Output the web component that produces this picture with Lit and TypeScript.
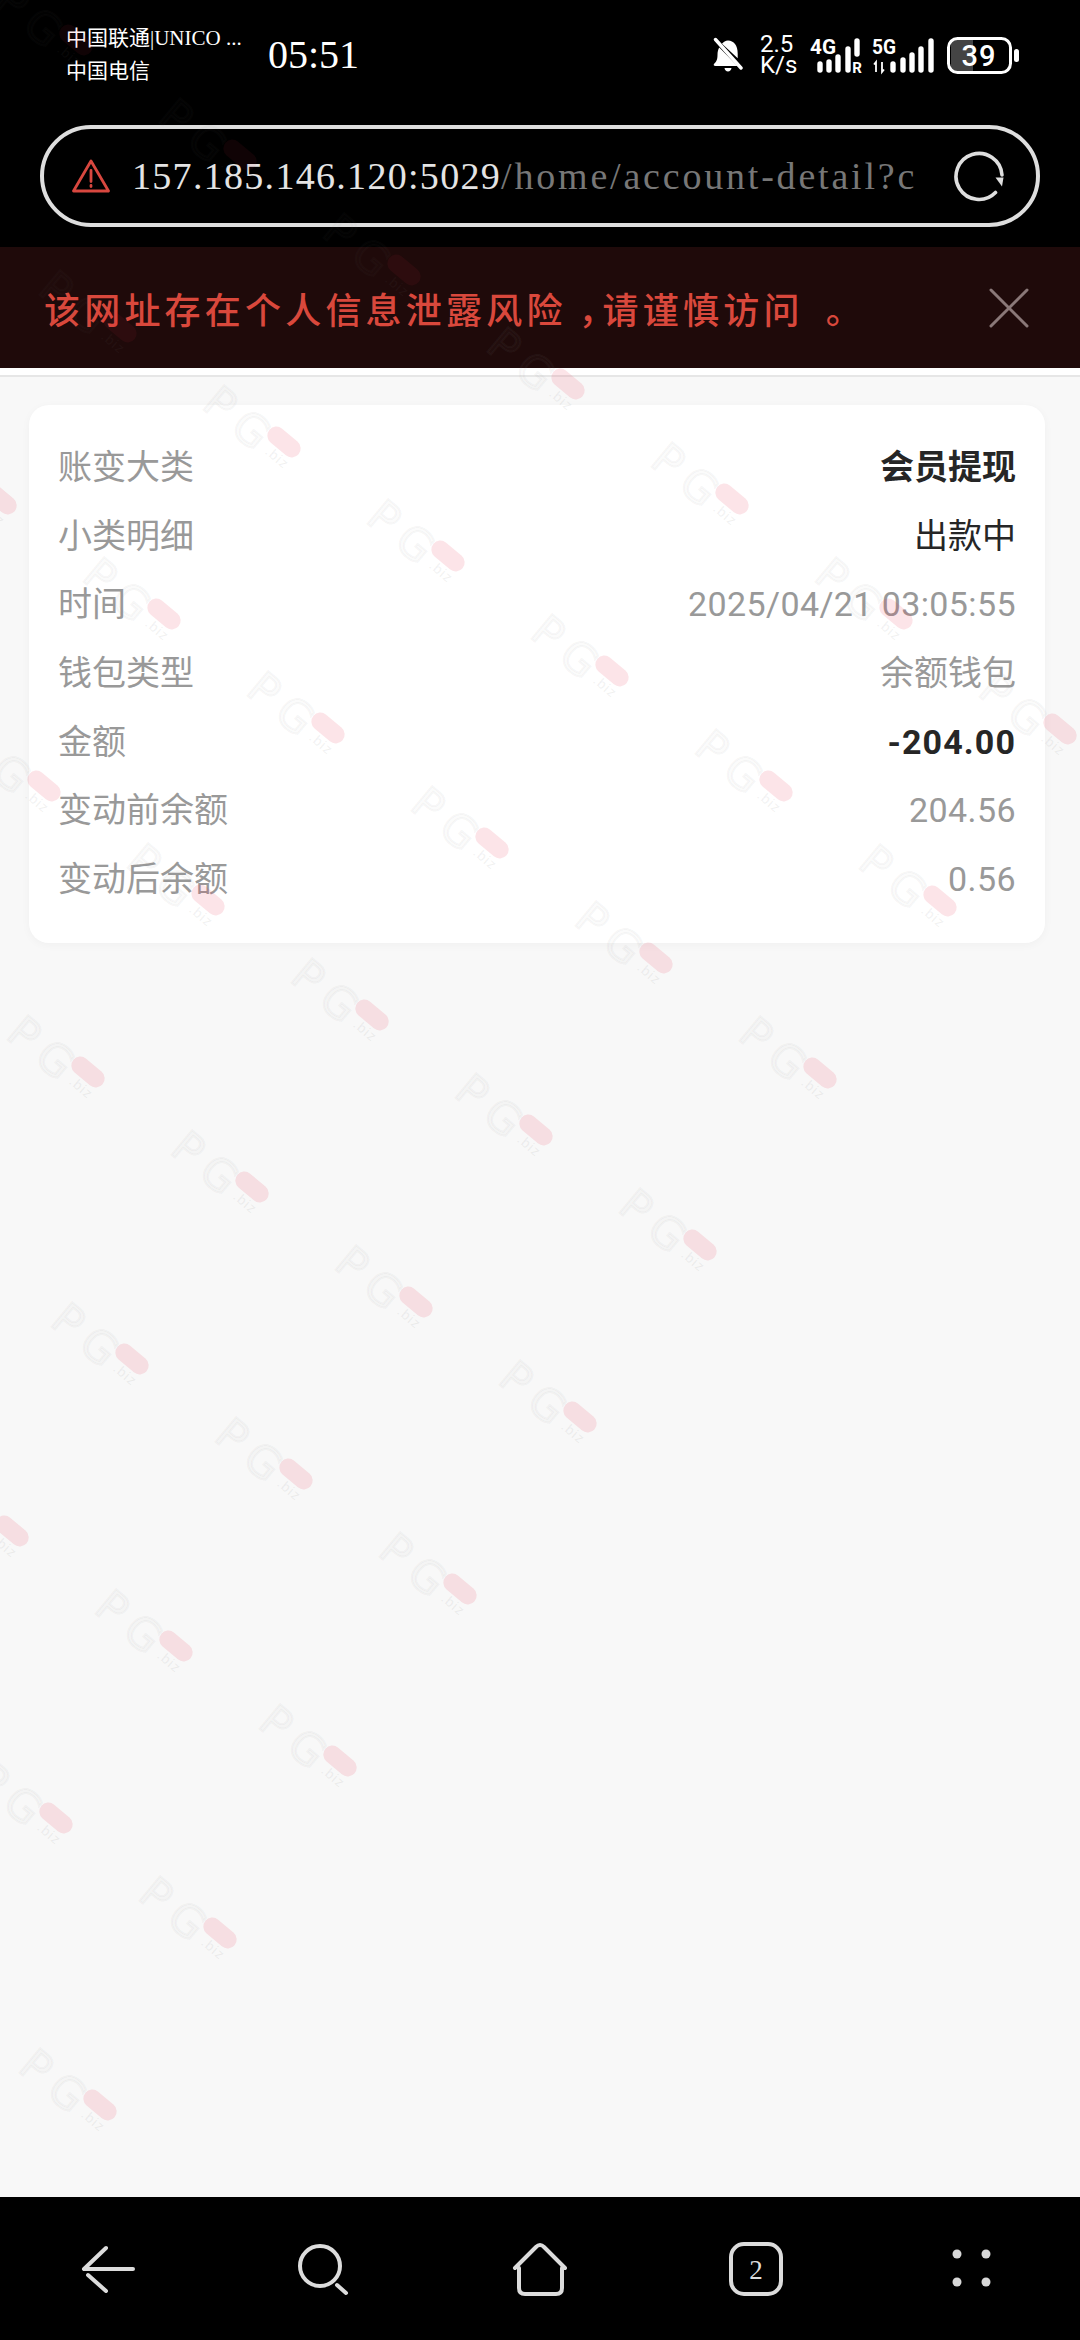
import { LitElement, html, css, svg } from "lit";
import { customElement } from "lit/decorators.js";

const rows = [
  { k: "账变大类", v: "会员提现", c: "strong cjk" },
  { k: "小类明细", v: "出款中", c: "dark cjk" },
  { k: "时间", v: "2025/04/21 03:05:55", c: "" },
  { k: "钱包类型", v: "余额钱包", c: "cjk" },
  { k: "金额", v: "-204.00", c: "strong num" },
  { k: "变动前余额", v: "204.56", c: "" },
  { k: "变动后余额", v: "0.56", c: "" },
];

function marks() {
  const out: { x: number; y: number; o: number }[] = [];
  for (let j = -1; j <= 7; j++) {
    for (let i = -1; i <= 5; i++) {
      const x = 120 + i * 164 - j * 120;
      const y = 327 + i * 114.7 + j * 172;
      if (x > -45 && x < 1130 && y > 0) out.push({ x, y, o: y < 345 ? 0.55 : 1 });
    }
  }
  return out;
}

const bars = (b: number[][]) =>
  b.map(([x, y, y2]) => svg`<line x1=${x} x2=${x} y1=${y} y2=${y2}></line>`);

@customElement("app-root")
export class AppRoot extends LitElement {
  static styles = css`
    :host {
      display: flex;
      flex-direction: column;
      position: relative;
      width: 1080px;
      height: 2340px;
      overflow: hidden;
      background: #f8f8f8;
      font-family: "Noto Sans CJK SC", "Noto Sans", sans-serif;
    }
    svg { display: block; flex: none; }
    .top { background: #000; height: 247px; display: flex; flex-direction: column; flex: none; }
    .status { display: flex; align-items: center; height: 110px; padding: 0 61px 0 66px; color: #fff; flex: none; }
    .carrier { width: 202px; font-family: "Liberation Serif", "Noto Sans CJK SC", serif; font-size: 21px; line-height: 33px; white-space: nowrap; }
    .carrier span { display: block; }
    .time { font-family: "Liberation Serif", serif; font-size: 40px; line-height: 44px; width: 200px; }
    .tray { margin-left: auto; display: flex; align-items: center; }
    .bell { margin-right: 17px; }
    .speed { width: 33px; margin-right: 13px; font-family: Roboto, sans-serif; font-size: 24px; line-height: 21px; text-align: center; }
    .speed span { display: block; }
    .signal { margin-right: 11px; }
    .url {
      margin: 15px 40px 0;
      height: 102px;
      box-sizing: border-box;
      border: 4px solid #dedede;
      border-radius: 51px;
      display: flex;
      align-items: center;
      padding: 0 31px 0 28px;
      flex: none;
    }
    .addr {
      width: 785px;
      margin-left: 22px;
      overflow: hidden;
      white-space: nowrap;
      font-family: "Liberation Serif", serif;
      font-size: 38px;
      line-height: 50px;
      letter-spacing: 1.3px;
      color: #e4e4e4;
    }
    .addr em { font-style: normal; color: #777; letter-spacing: 2.8px; }
    .reload { margin-left: auto; }
    .warn {
      height: 121px;
      flex: none;
      background: #1f0a0a;
      display: flex;
      align-items: center;
      padding: 0 51px 0 44px;
      color: #d9483c;
      font-size: 36px;
      font-weight: 500;
      letter-spacing: 4.2px;
      white-space: nowrap;
    }
    .warn > span { flex: 1; }
    .warn .p { display: inline-block; width: 36px; text-indent: 12px; }
    .warn .e { display: inline-block; width: 36px; text-indent: 22px; }
    .gap { height: 7px; background: #fff; flex: none; border-bottom: 2px solid #e6e6e6; }
    main { flex: 1; padding: 28px 35px 0 29px; }
    .card {
      background: #fff;
      border-radius: 20px;
      padding: 28px 29px 30px;
      box-shadow: 0 2px 10px rgba(0, 0, 0, 0.035);
    }
    .row { display: flex; justify-content: space-between; align-items: center; height: 68.6px; font-size: 34px; color: #999; }
    .row .k { padding-bottom: 5px; }
    .row .v { font-family: Roboto, "Noto Sans CJK SC", sans-serif; letter-spacing: 0.4px; }
    .row .cjk { padding-bottom: 5px; letter-spacing: 0; }
    .row .strong { color: #262626; font-weight: 700; }
    .row .num { letter-spacing: 1.1px; }
    .row .dark { color: #262626; }
    nav { height: 143px; background: #000; display: grid; grid-template-columns: repeat(5, 1fr); align-items: center; justify-items: center; flex: none; }
    .ic { fill: none; stroke: #dcdcdc; stroke-width: 4; stroke-linecap: round; stroke-linejoin: round; }
    .wm { position: absolute; left: 0; top: 0; width: 100%; height: 100%; pointer-events: none; }
    .mark { position: absolute; width: 0; height: 0; transform: rotate(40deg); }
    .mark b {
      position: absolute;
      right: 6px;
      top: -10px;
      font: 400 44px/44px "DejaVu Sans", sans-serif;
      letter-spacing: 10px;
      color: rgba(140, 140, 140, 0.03);
      -webkit-text-stroke: 2px rgba(140, 140, 140, 0.08);
    }
    .mark i { position: absolute; left: -19px; top: -9px; width: 38px; height: 18px; border-radius: 9px; background: rgba(232, 50, 75, 0.13); }
    .mark u { position: absolute; left: -8px; top: 8px; font: 400 14px/16px "Liberation Sans", sans-serif; text-decoration: none; color: rgba(140, 140, 140, 0.12); letter-spacing: 1px; }
  `;

  render() {
    return html`
      <div class="top">
        <div class="status">
          <div class="carrier"><span>中国联通|UNICO ...</span><span>中国电信</span></div>
          <div class="time">05:51</div>
          <div class="tray">
            <svg class="bell" width="30" height="36" viewBox="0 0 30 36">
              <path fill="#fff" d="M1 27c2.500-2.500 3.500-4.500 3.500-9 0-3 .5-5.500 1.800-7.500L24.500 29H2.500C.8 29 .2 27.800 1 27zM9 6.800C10.500 4.800 12.500 3.500 15 3.500c5.800 0 9.700 4.800 9.700 13v4.700L9 6.800zM11.500 31h7c-.3 2.300-1.700 3.500-3.500 3.500s-3.200-1.200-3.500-3.500z"></path>
              <path stroke="#fff" stroke-width="3.400" stroke-linecap="round" d="M2.500 2.500 L28 31"></path>
            </svg>
            <div class="speed"><span>2.5</span><span>K/s</span></div>
            <svg class="signal" width="130" height="40" viewBox="805 33 130 40">
              <g fill="#fff" font-family="Roboto, sans-serif" font-weight="700">
                <text x="809" y="52" font-size="20" textLength="26" lengthAdjust="spacingAndGlyphs">4G</text>
                <text x="871" y="52" font-size="20" textLength="24" lengthAdjust="spacingAndGlyphs">5G</text>
                <text x="856" y="71" font-size="15" text-anchor="middle">R</text>
              </g>
              <g stroke="#fff" stroke-width="5.400" stroke-linecap="round">
                ${bars([[819, 62, 68], [828, 60, 68], [837, 55, 68], [847, 47, 68], [856, 39, 52], [892, 62, 68], [902, 58, 68], [911, 53, 68], [920, 47, 68], [930, 39, 68]])}
              </g>
              <path stroke="#fff" stroke-width="1.800" fill="none" d="M875 70V60l-2 2.500M881 60v10l2-2.500"></path>
            </svg>
            <svg width="72" height="37" viewBox="0 0 72 37">
              <path fill="#444" d="M4 3h22v31H4z"></path>
              <rect x="1.500" y="1.500" width="62" height="34" rx="9" fill="none" stroke="#fff" stroke-width="3"></rect>
              <text x="32" y="29" text-anchor="middle" fill="#fff" font-family="Roboto, sans-serif" font-weight="500" font-size="29" letter-spacing="1">39</text>
              <rect x="67" y="12" width="5" height="13" rx="2.500" fill="#fff"></rect>
            </svg>
          </div>
        </div>
        <div class="url">
          <svg width="38" height="34" viewBox="0 0 38 34" fill="none" stroke="#d8473f" stroke-width="2.800" stroke-linejoin="round" stroke-linecap="round">
            <path d="M19 2 L36.500 32 H1.500 Z"></path>
            <path d="M19 11.500v11M19 26.500v1"></path>
          </svg>
          <div class="addr">157.185.146.120:5029<em>/home/account-detail?cf</em></div>
          <svg class="reload" width="52" height="52" viewBox="0 0 52 52">
            <path fill="none" stroke="#dedede" stroke-width="3.600" stroke-linecap="round" d="M49 25A23 23 0 1 0 42.500 42.500"></path>
            <path fill="#dedede" d="M42.500 27.500H50.500L49 36.500z"></path>
          </svg>
        </div>
      </div>
      <div class="warn">
        <span>该网址存在个人信息泄露风险<span class="p">，</span>请谨慎访问<span class="e">。</span></span>
        <svg width="40" height="40" viewBox="0 0 40 40" stroke="#8a7878" stroke-width="3" stroke-linecap="round">
          <path d="M2 2 38 38M38 2 2 38"></path>
        </svg>
      </div>
      <div class="gap"></div>
      <main>
        <div class="card">
          ${rows.map(
            (r) => html`<div class="row"><span class="k">${r.k}</span><span class="v ${r.c}">${r.v}</span></div>`
          )}
        </div>
      </main>
      <nav>
        <svg class="ic" width="54" height="48" viewBox="0 0 54 48">
          <path d="M3 24H52M3 24 25 3M7 30 25 46"></path>
        </svg>
        <svg class="ic" width="56" height="54" viewBox="0 0 56 54">
          <circle cx="24" cy="24" r="20"></circle>
          <path d="M41 43 50 51"></path>
        </svg>
        <svg class="ic" width="56" height="54" viewBox="0 0 56 54">
          <path d="M3 26 24 5Q28 1 32 5L53 26M7 26V46Q7 52 13 52H44Q50 52 50 46V26"></path>
        </svg>
        <svg class="ic" width="54" height="54" viewBox="0 0 54 54">
          <rect x="2" y="2" width="50" height="50" rx="13"></rect>
          <text x="27" y="37" text-anchor="middle" font-family="Liberation Serif, serif" font-size="27" fill="#dcdcdc" stroke="none">2</text>
        </svg>
        <svg width="40" height="40" viewBox="0 0 40 40" fill="#d8d8d8">
          <circle cx="5" cy="5" r="4.500"></circle><circle cx="34" cy="5" r="4.500"></circle>
          <circle cx="5" cy="33" r="4.500"></circle><circle cx="34" cy="33" r="4.500"></circle>
        </svg>
      </nav>
      <div class="wm">
        ${marks().map(
          (m) => html`<div class="mark" style="left:${m.x}px;top:${m.y}px;opacity:${m.o}"><b>PG</b><i></i><u>.biz</u></div>`
        )}
      </div>
    `;
  }
}
